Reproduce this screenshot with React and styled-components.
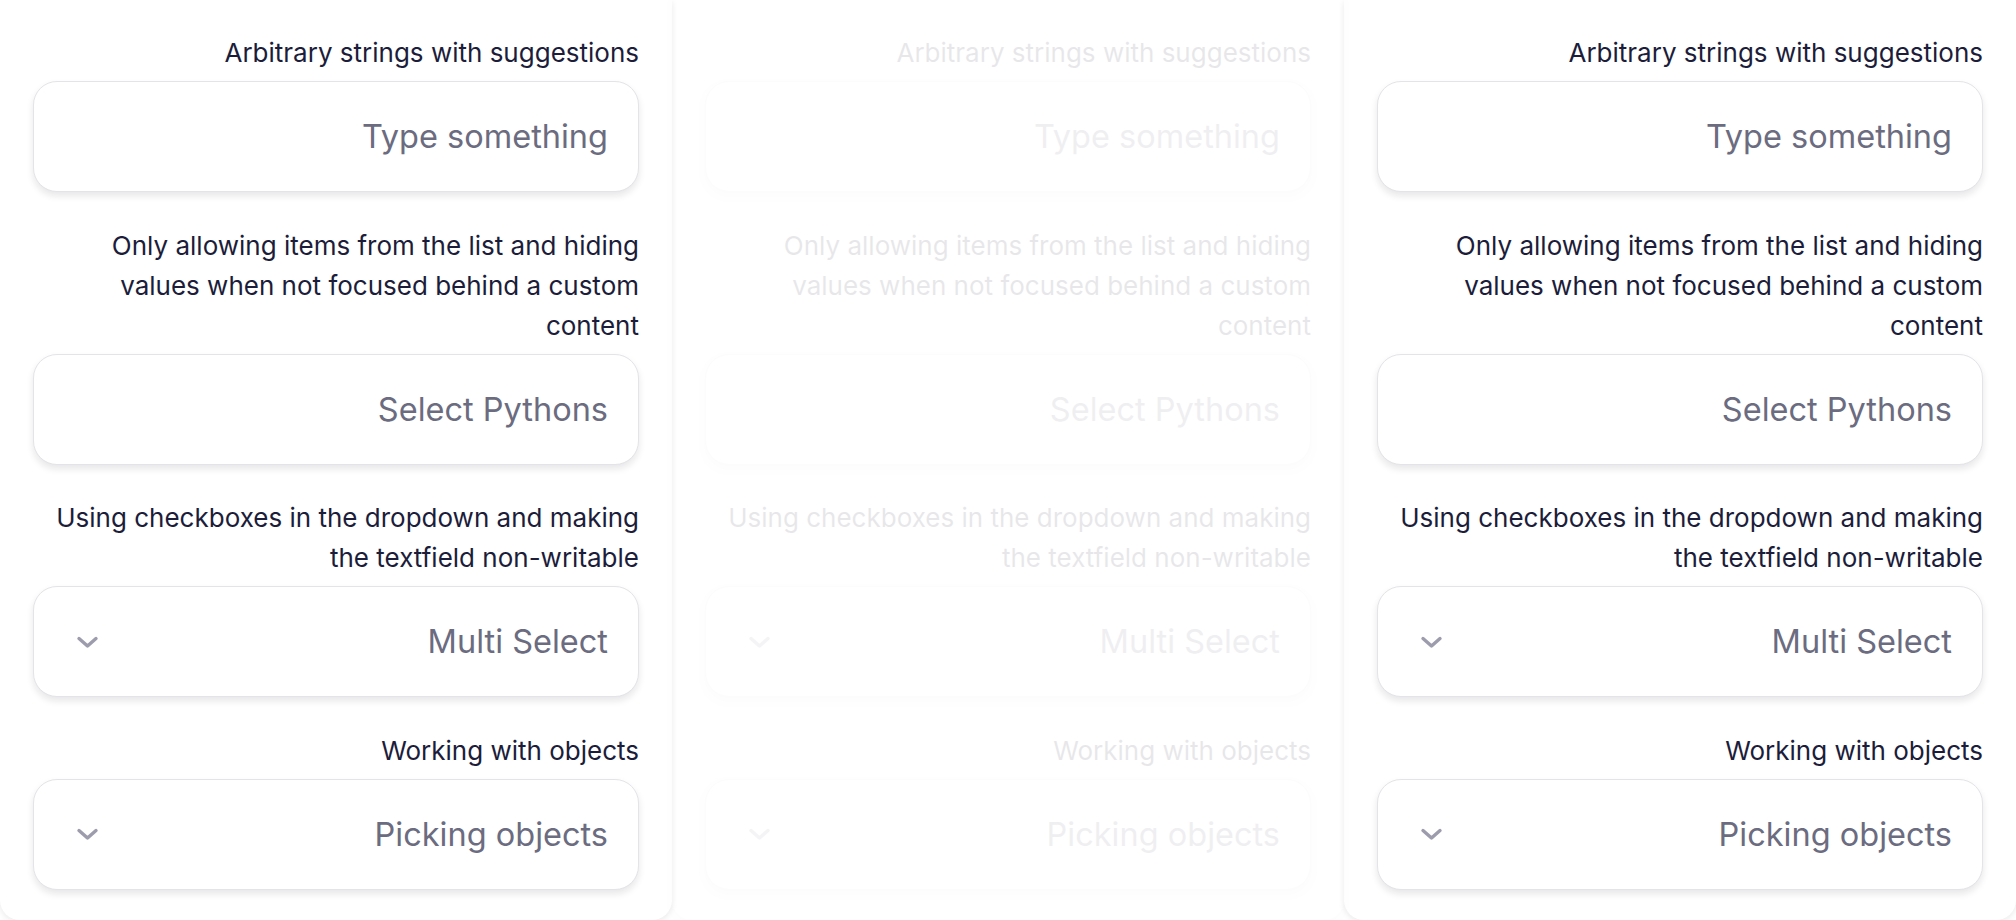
import React from 'react'
import styled, { createGlobalStyle } from 'styled-components'

const Global = createGlobalStyle`
  html, body { margin: 0; padding: 0; background: #ffffff; }
  body { font-family: Inter, "Noto Sans", sans-serif; overflow: hidden; }
`

const Page = styled.div`
  display: grid;
  grid-template-columns: repeat(3, 672px);
  height: 920px;
`

const Card = styled.div`
  height: 920px;
  box-sizing: border-box;
  padding: 33px 33px 0;
  background: #ffffff;
  border-radius: 0 0 20px 20px;
  box-shadow: 0 2px 6px rgba(20, 20, 40, 0.09);
  display: flex;
  flex-direction: column;
  gap: 33.5px;
  direction: rtl;
  opacity: ${p => (p.$disabled ? 0.1 : 1)};
`

const Field = styled.div`
  display: flex;
  flex-direction: column;
  gap: 8px;
`

const Label = styled.label`
  font-size: 26px;
  line-height: 40px;
  color: #1c1d3a;
  text-align: right;
`

const Box = styled.div`
  height: 111px;
  box-sizing: border-box;
  border: 1.5px solid #e4e4e8;
  border-radius: 24px;
  background: #ffffff;
  box-shadow: 0 4px 7px rgba(20, 20, 40, 0.1);
  display: flex;
  align-items: center;
  justify-content: space-between;
  padding: 0 30px 0 42px;
`

const Placeholder = styled.span`
  font-size: 32.5px;
  color: #6b6c80;
`

const Chevron = styled.svg`
  width: 23px;
  height: 14px;
  flex: none;
`

function ChevronDown() {
  return (
    <Chevron viewBox="0 0 23 14">
      <path d="M3 3.5 L11.5 11 L20 3.5" fill="none" stroke="#9c9cad" strokeWidth="3.4" strokeLinecap="round" strokeLinejoin="round" />
    </Chevron>
  )
}

const fields = [
  { label: 'Arbitrary strings with suggestions', text: 'Type something' },
  { label: 'Only allowing items from the list and hiding values when not focused behind a custom content', text: 'Select Pythons' },
  { label: 'Using checkboxes in the dropdown and making the textfield non-writable', text: 'Multi Select', chevron: true },
  { label: 'Working with objects', text: 'Picking objects', chevron: true },
]

function Column({ disabled }) {
  return (
    <Card $disabled={disabled}>
      {fields.map(f => (
        <Field key={f.label}>
          <Label>{f.label}</Label>
          <Box>
            <Placeholder>{f.text}</Placeholder>
            {f.chevron && <ChevronDown />}
          </Box>
        </Field>
      ))}
    </Card>
  )
}

export default function App() {
  return (
    <>
      <Global />
      <Page>
        <Column />
        <Column disabled />
        <Column />
      </Page>
    </>
  )
}
